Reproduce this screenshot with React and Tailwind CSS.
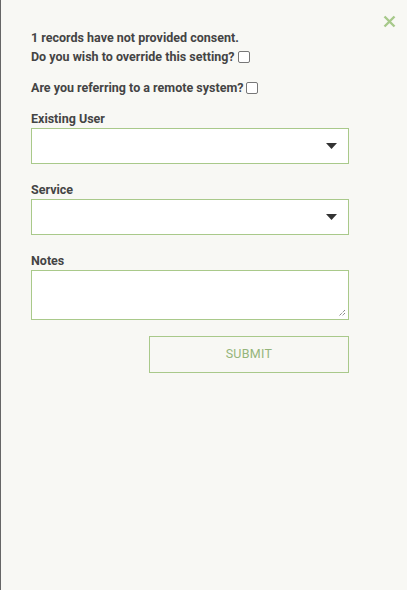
import React from 'react';

export default function App() {
  return (
    <div
      className="relative h-[590px] w-[407px] overflow-hidden border-l border-[#666] bg-[#f8f8f4] text-[#444]"
      style={{ fontFamily: 'Roboto, "Liberation Sans", sans-serif' }}
    >
      <button className="absolute right-[11px] top-[15px] text-[#a7c98a]">
        <svg width="13" height="13" viewBox="0 0 13 13">
          <path d="M1.5 1.5 L11.5 11.5 M11.5 1.5 L1.5 11.5" stroke="currentColor" strokeWidth="2.4" />
        </svg>
      </button>

      <div className="flex w-[348px] flex-col pl-[30px] pt-[28px]">
        <div className="text-[12.5px] font-bold leading-[19px]">1 records have not provided consent.</div>
        <div className="flex h-[19px] items-center text-[12.5px] font-bold leading-[19px]">
          Do you wish to override this setting?
          <span className="ml-[3px] inline-block h-[12px] w-[12px] rounded-[2px] border border-[#777] bg-white" />
        </div>

        <div className="mt-[12px] flex h-[19px] items-center text-[12.5px] font-bold leading-[19px]">
          Are you referring to a remote system?
          <span className="ml-[3px] inline-block h-[12px] w-[12px] rounded-[2px] border border-[#777] bg-white" />
        </div>

        <div className="mt-[12px] text-[12.5px] font-bold leading-[19px]">Existing User</div>
        <div className="flex h-[36px] items-center justify-end border border-[#a9c98a] bg-white pr-[11px]">
          <svg width="11" height="6" viewBox="0 0 11 6">
            <path d="M0 0 H11 L5.5 6 Z" fill="#333" />
          </svg>
        </div>

        <div className="mt-[16px] text-[12.5px] font-bold leading-[19px]">Service</div>
        <div className="flex h-[36px] items-center justify-end border border-[#a9c98a] bg-white pr-[11px]">
          <svg width="11" height="6" viewBox="0 0 11 6">
            <path d="M0 0 H11 L5.5 6 Z" fill="#333" />
          </svg>
        </div>

        <div className="mt-[16px] text-[12.5px] font-bold leading-[19px]">Notes</div>
        <div className="relative h-[50px] border border-[#a9c98a] bg-white">
          <svg className="absolute bottom-[2px] right-[2px]" width="8" height="8" viewBox="0 0 8 8">
            <path d="M7 1 L1 7 M7 4 L4 7" stroke="#555" strokeWidth="1" strokeDasharray="1 1" />
          </svg>
        </div>

        <div className="mt-[16px] flex justify-end">
          <button className="h-[37px] w-[200px] border border-[#a9c98a] text-[12.5px] tracking-[0.3px] text-[#95b57a]">
            SUBMIT
          </button>
        </div>
      </div>
    </div>
  );
}
